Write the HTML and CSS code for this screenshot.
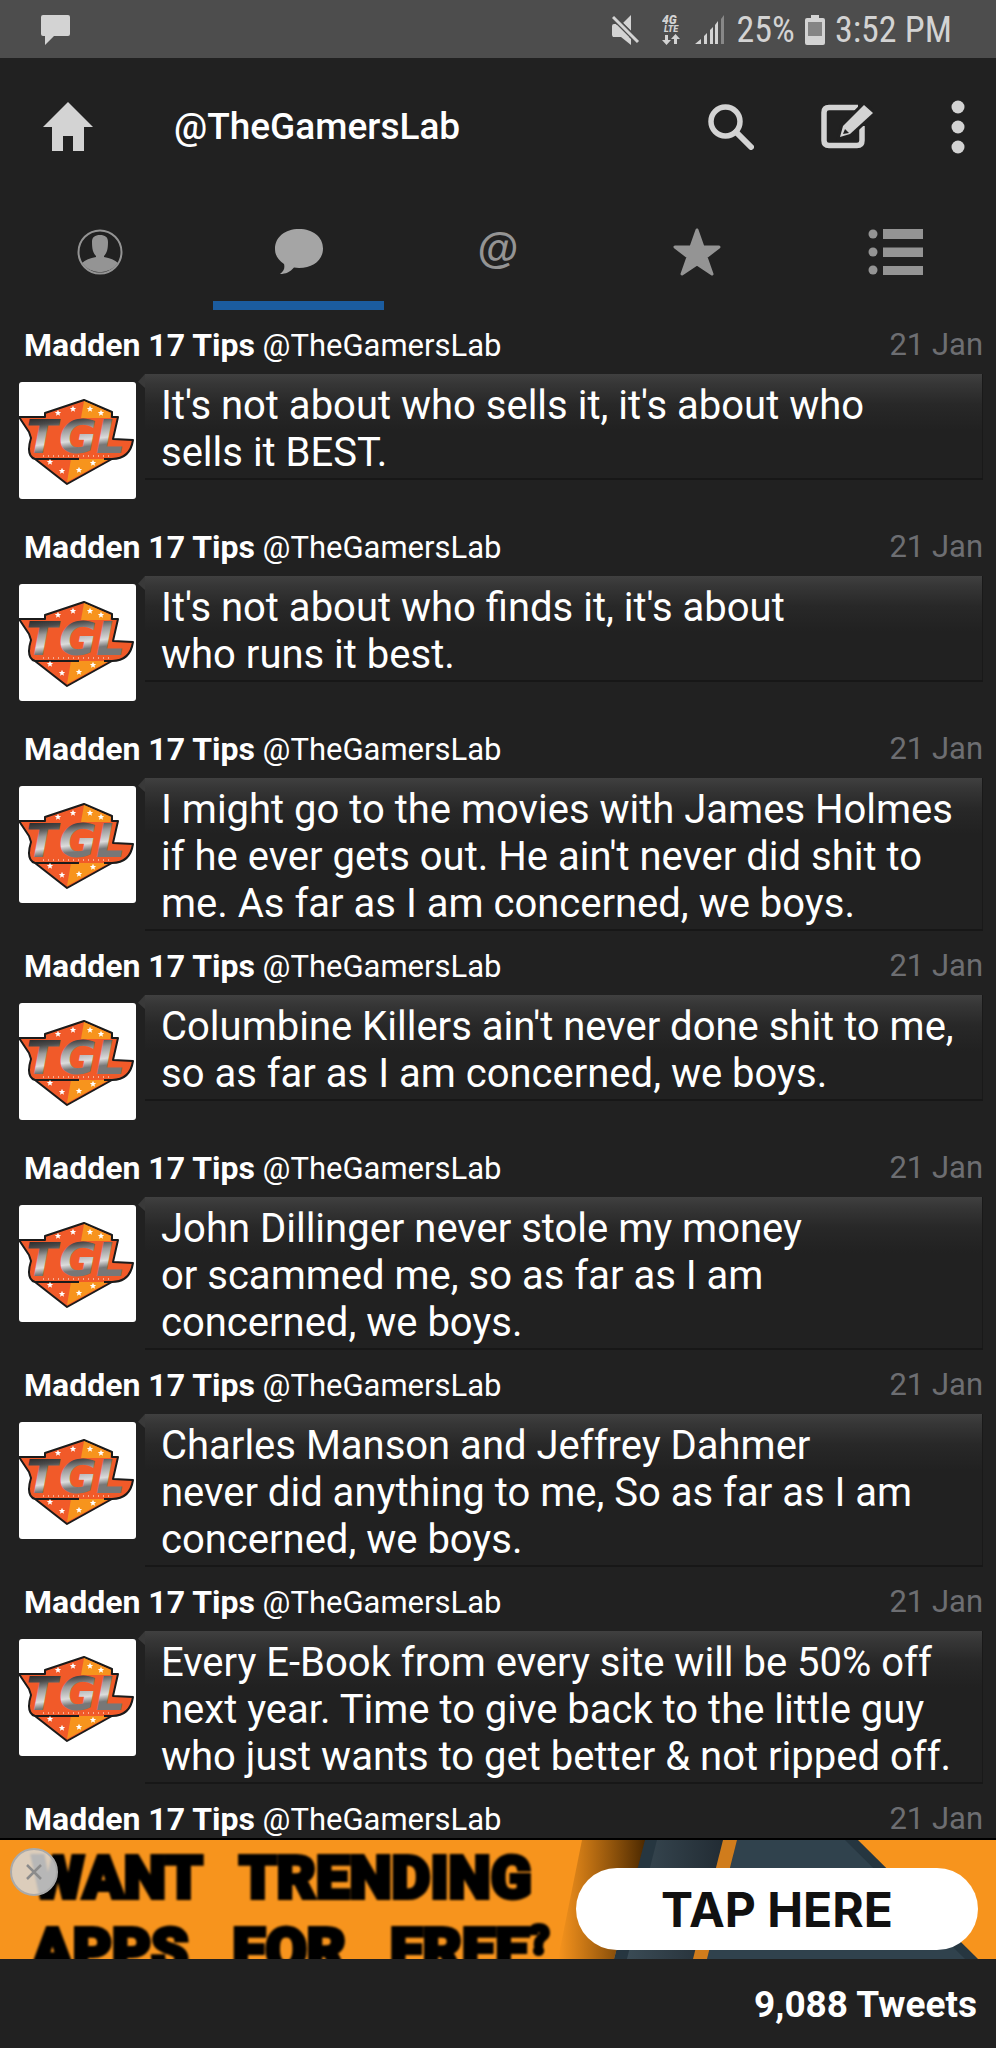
FILE: index.html
```
<!DOCTYPE html>
<html lang="en">
<head>
<meta charset="utf-8">
<meta name="viewport" content="width=device-width, initial-scale=1">
<title>@TheGamersLab</title>
<link rel="stylesheet" href="styles.css">
</head>
<body>
<svg class="defs" aria-hidden="true">
  <defs>
    <linearGradient id="steel" gradientUnits="userSpaceOnUse" x1="0" y1="38" x2="4" y2="72">
      <stop offset="0" stop-color="#2b2b2b"/><stop offset="0.2" stop-color="#4a4a4a"/><stop offset="0.45" stop-color="#9a9a9a"/><stop offset="0.8" stop-color="#dcdcdc"/><stop offset="1" stop-color="#777"/>
    </linearGradient>
    <path id="star5" d="M0-3.2 1-1 3.2-.9 1.400.6 2 2.800 0 1.500-2 2.800-1.400.6-3.200-.9-1-1Z"/>
    <symbol id="logo" viewBox="0 0 117 117">
      <path d="M65 18 93 30V35H99L94 57 114 58C112 71 104 77 93 77L48 102 16 77C10 75 8 69 12 56L10 50 0 35H26V31Z" fill="#f15a29" stroke="#1b1b1b" stroke-width="2" stroke-linejoin="round"/>
      <path d="M65 19 92 31 91 36H62Z" fill="#f7941d"/>
      <path d="M52 77H90L48 100Z" fill="#f7941d"/>
      <path d="M16 77H60M85 77H94" stroke="#1b1b1b" stroke-width="2"/>
      <text class="logo-text" y="71" fill="url(#steel)"><tspan x="7">T</tspan><tspan x="40">G</tspan><tspan x="77">L</tspan></text>
      <path d="M24 74H92" stroke="#fff" stroke-width="1" stroke-dasharray="1 4"/>
      <g fill="#fff"><use href="#star5" x="39" y="31"/><use href="#star5" x="54" y="27"/><use href="#star5" x="71" y="27"/><use href="#star5" x="82" y="31"/><use href="#star5" x="31" y="80"/><use href="#star5" x="43" y="89"/><use href="#star5" x="60" y="88"/><use href="#star5" x="74" y="81"/></g>
    </symbol>
  </defs>
</svg>
<div class="app">
  <div class="status">
    <svg width="30" height="30" viewBox="0 0 30 30"><path d="M2 0H27Q29 0 29 2V19Q29 21 27 21H13L4 30V21H2Q0 21 0 19V2Q0 0 2 0Z" fill="#d3d3d3"/></svg>
    <div class="status-right">
      <svg class="mute" width="28" height="30" viewBox="0 0 28 30" fill="#d3d3d3"><path d="M11 8 19 0V16ZM2 9H6L19 22V30L9 22H2Q0 22 0 20V11Q0 9 2 9Z"/><path d="M1 2 26 27" stroke="#4d4d4d" stroke-width="6"/><path d="M1 2 26 27" stroke="#d3d3d3" stroke-width="3"/><path d="M1 10H5L17 22H1Z"/></svg>
      <svg class="lte" width="20" height="30" viewBox="0 0 20 30" fill="#d3d3d3"><text x="0" y="9" class="lte-a">4G</text><text x="2" y="17" class="lte-b">LTE</text><path d="M3 20H6V25H9L4.500 30 0 25H3ZM12 29V24H9L13.500 19 18 24H15V29Z"/></svg>
      <svg class="signal" width="30" height="30" viewBox="0 0 30 30" fill="#d3d3d3"><path d="M0 29 6 24V29ZM9 21 12 18V29H9ZM15 15 18 12V29H15ZM20 10 23 6V29H20Z"/><path d="M26 4 29 0V29H26Z" fill="#888"/></svg>
      <span class="battery-text">25%</span>
      <svg class="battery" width="20" height="30" viewBox="0 0 20 30"><path d="M6 0H14V3H18Q20 3 20 5V28Q20 30 18 30H2Q0 30 0 28V5Q0 3 2 3H6Z" fill="#d3d3d3"/><path d="M3 7H17V21H3Z" fill="#858585"/></svg>
      <span>3:52 PM</span>
    </div>
  </div>

  <header class="bar">
    <button class="icon-btn home" aria-label="Home"><svg width="50" height="50" viewBox="0 0 50 50"><path d="M25 0 50 25H41V49H30V34H20V49H9V25H0Z" fill="#d3d3d3"/></svg></button>
    <h1 class="title">@TheGamersLab</h1>
    <button class="icon-btn search" aria-label="Search"><svg width="46" height="46" viewBox="0 0 46 46" fill="none" stroke="#d3d3d3"><circle cx="17.500" cy="17.500" r="14.500" stroke-width="5.500"/><path d="M28 28 43 43" stroke-width="6" stroke-linecap="round"/></svg></button>
    <button class="icon-btn compose" aria-label="Compose"><svg width="52" height="46" viewBox="0 0 52 46"><path d="M37 3.500H8Q3 3.500 3 8.500V36.500Q3 41.500 8 41.500H36Q41 41.500 41 36.500V22" fill="none" stroke="#d3d3d3" stroke-width="5.500"/><path d="M43 1 52 9 29 30 19 33 22 22Z" fill="#d3d3d3" stroke="#212121" stroke-width="6" paint-order="stroke"/><path d="M24 25 28 29 22 30Z" fill="#212121"/></svg></button>
    <button class="icon-btn more" aria-label="More options"><svg width="14" height="54" viewBox="0 0 14 54" fill="#d3d3d3"><circle cx="7" cy="7" r="6.500"/><circle cx="7" cy="27" r="6.500"/><circle cx="7" cy="47" r="6.500"/></svg></button>
  </header>

  <nav class="tabs">
    <button class="tab" aria-label="Profile"><svg width="46" height="46" viewBox="0 0 46 46"><circle cx="23" cy="23" r="21.500" fill="none" stroke="#949494" stroke-width="2"/><path d="M15 13C15 8 18 6 23 6S31 8 31 13C31 20 30 24 27 27V28C33 29 38 31 41 34A22 22 0 0 1 5 34C8 31 13 29 19 28V27C16 24 15 20 15 13Z" fill="#949494"/></svg></button>
    <button class="tab active" aria-label="Tweets"><svg width="50" height="46" viewBox="0 0 50 46"><path d="M25 0C39 0 49 8 49 19.500S39 39 25 39L20 38.500C16 43 12 45 6 45C10 42 11 39 10 35C4 31 1 26 1 20C1 8 11 0 25 0Z" fill="#a5a5a5"/></svg></button>
    <button class="tab at" aria-label="Mentions">@</button>
    <button class="tab" aria-label="Favourites"><svg width="50" height="50" viewBox="0 0 50 50"><path d="M25 3 31 20H47L34 30 40 47 25 37 10 47 16 30 3 20H19Z" fill="#949494" stroke="#949494" stroke-width="3" stroke-linejoin="round"/></svg></button>
    <button class="tab" aria-label="Lists"><svg width="56" height="48" viewBox="0 0 56 48" fill="#949494"><circle cx="5" cy="6" r="4.500"/><circle cx="5" cy="24" r="4.500"/><circle cx="5" cy="42" r="4.500"/><path d="M15 1H55V11H15ZM15 19.500H55V29H15ZM15 38H55V47H15Z"/></svg></button>
  </nav>

  <main class="feed">
    <article class="tweet">
      <div class="meta"><p class="who"><b>Madden 17 Tips</b> @TheGamersLab</p><time>21 Jan</time></div>
      <div class="row"><svg class="avatar" role="img" aria-label="TGL"><use href="#logo"/></svg><p class="bubble">It's not about who sells it, it's about who<br>sells it BEST.</p></div>
    </article>
    <article class="tweet">
      <div class="meta"><p class="who"><b>Madden 17 Tips</b> @TheGamersLab</p><time>21 Jan</time></div>
      <div class="row"><svg class="avatar" role="img" aria-label="TGL"><use href="#logo"/></svg><p class="bubble">It's not about who finds it, it's about<br>who runs it best.</p></div>
    </article>
    <article class="tweet">
      <div class="meta"><p class="who"><b>Madden 17 Tips</b> @TheGamersLab</p><time>21 Jan</time></div>
      <div class="row"><svg class="avatar" role="img" aria-label="TGL"><use href="#logo"/></svg><p class="bubble">I might go to the movies with James Holmes<br>if he ever gets out. He ain't never did shit to<br>me. As far as I am concerned, we boys.</p></div>
    </article>
    <article class="tweet">
      <div class="meta"><p class="who"><b>Madden 17 Tips</b> @TheGamersLab</p><time>21 Jan</time></div>
      <div class="row"><svg class="avatar" role="img" aria-label="TGL"><use href="#logo"/></svg><p class="bubble">Columbine Killers ain't never done shit to me,<br>so as far as I am concerned, we boys.</p></div>
    </article>
    <article class="tweet">
      <div class="meta"><p class="who"><b>Madden 17 Tips</b> @TheGamersLab</p><time>21 Jan</time></div>
      <div class="row"><svg class="avatar" role="img" aria-label="TGL"><use href="#logo"/></svg><p class="bubble">John Dillinger never stole my money<br>or scammed me, so as far as I am<br>concerned, we boys.</p></div>
    </article>
    <article class="tweet">
      <div class="meta"><p class="who"><b>Madden 17 Tips</b> @TheGamersLab</p><time>21 Jan</time></div>
      <div class="row"><svg class="avatar" role="img" aria-label="TGL"><use href="#logo"/></svg><p class="bubble">Charles Manson and Jeffrey Dahmer<br>never did anything to me, So as far as I am<br>concerned, we boys.</p></div>
    </article>
    <article class="tweet">
      <div class="meta"><p class="who"><b>Madden 17 Tips</b> @TheGamersLab</p><time>21 Jan</time></div>
      <div class="row"><svg class="avatar" role="img" aria-label="TGL"><use href="#logo"/></svg><p class="bubble">Every E-Book from every site will be 50% off<br>next year. Time to give back to the little guy<br>who just wants to get better &amp; not ripped off.</p></div>
    </article>
    <article class="tweet">
      <div class="meta"><p class="who"><b>Madden 17 Tips</b> @TheGamersLab</p><time>21 Jan</time></div>
    </article>
  </main>

  <aside class="ad">
    <svg class="ad-art" viewBox="0 0 996 119" preserveAspectRatio="xMaxYMid slice" aria-hidden="true">
      <defs>
        <linearGradient id="shade"><stop offset="0" stop-color="#5a3000" stop-opacity="0"/><stop offset="1" stop-color="#4a2800"/></linearGradient>
        <linearGradient id="slate"><stop offset="0" stop-color="#3a4b55"/><stop offset="1" stop-color="#222c34"/></linearGradient>
      </defs>
      <rect width="996" height="119" fill="#f7941d"/>
      <path d="M582 0H646L614 119H558Z" fill="url(#shade)"/>
      <path d="M645 0H858L978 119H614Z" fill="#263640"/>
      <path d="M657 0H723L694 119H627Z" fill="url(#slate)"/>
      <path d="M737 0H845L965 119H707Z" fill="#30424d"/>
      <path d="M723 0H737L707 119H693Z" fill="#d07c1c"/>
    </svg>
    <p class="ad-copy"><span><i>WANT</i> <i>TRENDING</i></span><span><i>APPS</i> <i>FOR</i> <i>FREE<small>?</small></i></span></p>
    <button class="cta">TAP HERE</button>
    <button class="close" aria-label="Close advert"><svg width="16" height="16" viewBox="0 0 16 16"><path d="M1 1 15 15M15 1 1 15" stroke="#8b8b8b" stroke-width="2.500"/></svg></button>
  </aside>

  <footer class="count">9,088 Tweets</footer>
</div>
</body>
</html>
```
FILE: styles.css
```
* { box-sizing: border-box; }
body { margin: 0; background: #212121; color: #fff; font-family: Roboto, "Liberation Sans", sans-serif; }
p, h1 { margin: 0; }
button { margin: 0; padding: 0; border: 0; background: none; font: inherit; color: inherit; }
svg { display: block; flex: none; }
.defs { position: absolute; width: 0; height: 0; }
.app { display: flex; flex-direction: column; height: 100vh; overflow: hidden; }

.status { flex: none; display: flex; align-items: center; justify-content: space-between; height: 58px; padding: 2px 44px 0 41px; background: #4d4d4d; color: #d3d3d3; font-family: "Roboto Condensed", Roboto, sans-serif; font-size: 36px; }
.status-right { display: flex; align-items: center; }
.lte { margin-left: 22px; }
.signal { margin-left: 13px; }
.battery-text { margin-left: 12px; }
.battery { margin: 0 10px; }
.lte-a { font: italic 900 12px Roboto, sans-serif; }
.lte-b { font: italic 900 9px Roboto, sans-serif; }

.bar { flex: none; display: flex; align-items: center; height: 137px; padding: 0 31px 0 43px; }
.title { flex: 1; margin-left: 81px; font-size: 37px; font-weight: 500; line-height: 48px; }
.icon-btn { display: flex; }
.compose { margin-left: 67px; }
.more { margin-left: 78px; }

.tabs { flex: none; display: grid; grid-template-columns: repeat(5, 1fr); height: 115px; }
.tab { display: flex; align-items: center; justify-content: center; margin: 0 14px; padding-top: 8px; border-bottom: 9px solid transparent; color: #949494; }
.tab.active { border-color: #1b5c9f; }
.at { padding-top: 2px; font-family: "Liberation Sans", sans-serif; font-size: 42px; font-weight: 700; }

.feed { flex: 1; min-height: 0; overflow: hidden; }
.tweet { padding: 0 13px 0 19px; }
.meta { display: flex; align-items: center; justify-content: space-between; height: 64px; padding: 6px 0 0 5px; font-size: 31px; line-height: 40px; }
.meta b { font-size: 32px; }
.meta time { color: #6d6e72; }
.row { display: flex; gap: 9px; min-height: 138px; }
.avatar { width: 117px; height: 117px; margin-top: 8px; border-radius: 3px; background: #fff; }
.logo-text { font: italic 700 46px "DejaVu Sans", sans-serif; }
.bubble { position: relative; flex: 1; align-self: flex-start; padding: 8px 0 2px 16px; border-bottom: 2px solid #171717; border-right: 1px solid #191919; background: linear-gradient(#404040, #363636 10px, #282828 30px, #212121 56px); font-size: 40px; line-height: 47px; white-space: nowrap; }
.bubble::before { content: ""; position: absolute; left: -7px; top: 0; width: 7px; height: 14px; background: #393939; clip-path: polygon(100% 0, 0 55%, 100% 100%); }

.ad { position: relative; flex: none; display: flex; align-items: flex-start; justify-content: space-between; height: 121px; padding-right: 18px; border-top: 2px solid #000; overflow: hidden; }
.ad-art { position: absolute; inset: 0; width: 100%; height: 100%; }
.ad-copy { position: relative; padding: 2px 0 0 32px; color: #000; font-size: 60px; font-weight: 900; line-height: 72px; white-space: nowrap; -webkit-text-stroke: 4px #000; filter: blur(1px); }
.ad-copy span { display: flex; gap: 36px; }
.ad-copy span + span { gap: 44px; }
.ad-copy i { font-style: normal; }
.ad-copy small { font-size: 40px; vertical-align: 16px; line-height: 1; }
.cta { position: relative; width: 402px; height: 82px; margin-top: 28px; border-radius: 41px; background: #fff; color: #111; font-family: Inter, sans-serif; font-size: 48px; font-weight: 700; }
.close { position: absolute; left: 10px; top: 8px; display: flex; align-items: center; justify-content: center; width: 48px; height: 48px; border: 2px solid #aaa; border-radius: 50%; background: rgba(215, 215, 215, .85); }
.count { flex: none; height: 89px; padding: 0 19px; font-size: 37px; font-weight: 700; line-height: 92px; text-align: right; }
```
